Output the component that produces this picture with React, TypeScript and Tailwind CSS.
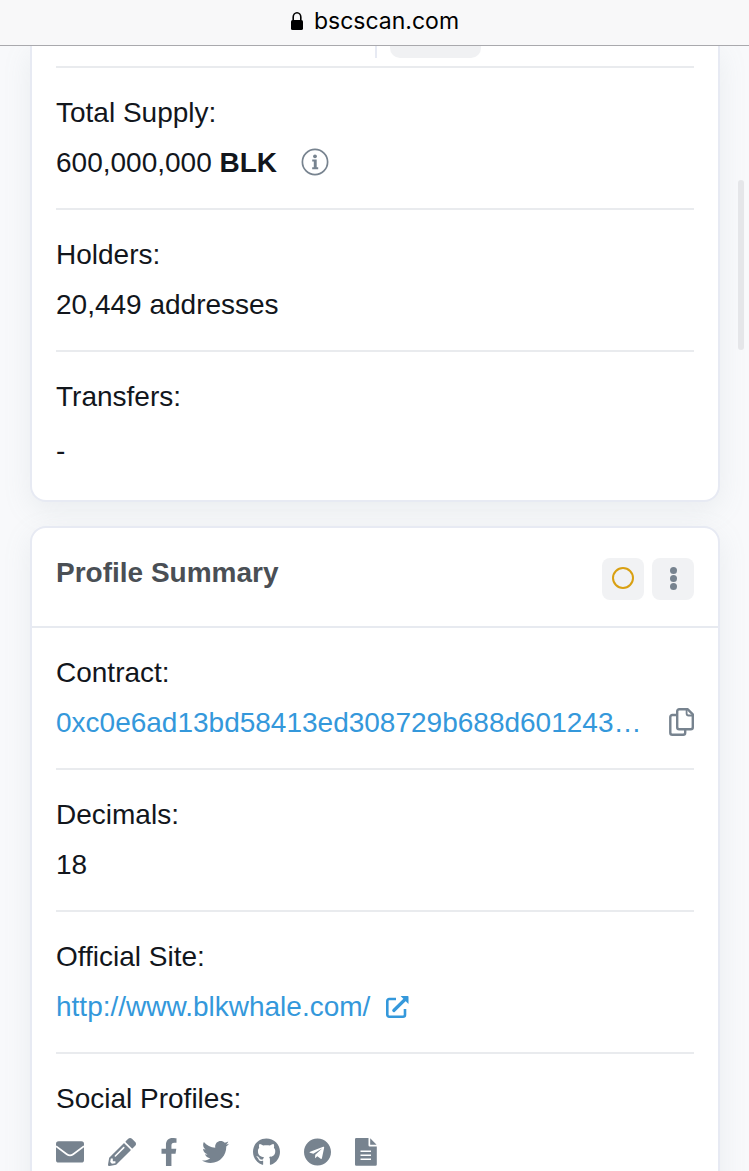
import type { ReactNode } from "react";
import {
  FaFacebookF,
  FaGithub,
  FaPencilAlt,
  FaTelegram,
  FaTwitter,
} from "react-icons/fa";

const LockIcon = () => (
  <svg viewBox="0 0 14 20" className="h-5 w-[14px]" aria-hidden="true">
    <rect x="1" y="9" width="12" height="10" rx="1.6" fill="#000" />
    <path
      d="M3.2 9.5V6a3.8 4.3 0 0 1 7.6 0v3.5"
      fill="none"
      stroke="#000"
      strokeWidth="1.6"
    />
  </svg>
);

const InfoIcon = () => (
  <svg viewBox="0 0 28 28" className="size-7" aria-hidden="true">
    <circle cx="14" cy="14" r="12.6" fill="none" stroke="#77838f" strokeWidth="1.7" />
    <circle cx="14" cy="8.3" r="1.9" fill="#77838f" />
    <path d="M11.2 11.4h4.5v7.8h1.5v2h-6v-2h1.6v-5.8h-1.6z" fill="#77838f" />
  </svg>
);

const CopyIcon = () => (
  <svg
    viewBox="0 0 25 28"
    className="h-7 w-[25px]"
    fill="none"
    stroke="currentColor"
    strokeWidth="2.4"
    strokeLinejoin="round"
    aria-hidden="true"
  >
    <path d="M10.2 1.3h8.6l5 5v12.9a2 2 0 0 1-2 2H10.2a2 2 0 0 1-2-2V3.3a2 2 0 0 1 2-2z" />
    <path d="M17.6 1.8v3.7a2 2 0 0 0 2 2h3.8" strokeWidth="1.8" />
    <path d="M8.2 7H3.3a2 2 0 0 0-2 2v15.700a2 2 0 0 0 2 2h10.900a2 2 0 0 0 2-2v-3.500" />
  </svg>
);

const ExternalIcon = () => (
  <svg viewBox="0 0 23 22" className="h-[22px] w-[23px]" fill="none" aria-hidden="true">
    <path
      d="M10 3H3.200A1.900 1.900 0 0 0 1.300 4.900v13.900a1.900 1.900 0 0 0 1.900 1.900h13.900a1.900 1.900 0 0 0 1.900-1.900V13"
      stroke="currentColor"
      strokeWidth="2.600"
    />
    <path d="M7.800 14.500 18.500 4" stroke="currentColor" strokeWidth="3.200" strokeLinecap="round" />
    <path d="M14.600 0h7.200a.7.7 0 0 1 .7.7v7.200z" fill="currentColor" />
  </svg>
);

const MailIcon = () => (
  <svg viewBox="0 0 28 28" className="size-7" aria-hidden="true">
    <rect y="3.300" width="28" height="21.300" rx="2.600" fill="currentColor" />
    <path
      d="M0 8.300l10.800 7.900q3.200 2.300 6.400 0L28 8.300"
      fill="none"
      stroke="#fff"
      strokeWidth="1.700"
    />
  </svg>
);

const DocIcon = () => (
  <svg viewBox="0 0 22 28" className="h-7 w-[22px]" aria-hidden="true">
    <path
      d="M1.300 0H13.500v7.200a1.300 1.300 0 0 0 1.300 1.300H21.800v18a1.300 1.300 0 0 1-1.300 1.300H1.300A1.300 1.300 0 0 1 0 26.500V1.300A1.300 1.300 0 0 1 1.300 0z"
      fill="currentColor"
    />
    <path d="M15.200 0.300l6.400 6.500h-6.400z" fill="currentColor" />
    <path d="M5.500 13.300h10.500M5.500 17.300h10.500M5.500 21.300h10.500" stroke="#fff" strokeWidth="1.600" />
  </svg>
);

const socials = [
  { label: "Email", icon: <MailIcon /> },
  { label: "Blog", icon: <FaPencilAlt className="h-7 w-7" /> },
  { label: "Facebook", icon: <FaFacebookF className="h-7 w-[18px]" /> },
  { label: "Twitter", icon: <FaTwitter className="h-7 w-[27px]" /> },
  { label: "GitHub", icon: <FaGithub className="h-7 w-[27px]" /> },
  { label: "Telegram", icon: <FaTelegram className="h-7 w-[27px]" /> },
  { label: "Whitepaper", icon: <DocIcon /> },
];

const Row = ({
  label,
  children,
  last = false,
}: {
  label: string;
  children: ReactNode;
  last?: boolean;
}) => (
  <div className={last ? "pt-6 pb-8" : "border-b-2 border-[#e9ebee] py-6"}>
    <dt>{label}</dt>
    <dd className="mt-2 flex h-[42px] items-center">{children}</dd>
  </div>
);

export default function App() {
  return (
    <div className="relative flex h-screen flex-col overflow-hidden bg-[#f8f9fb] font-['Liberation_Sans',Arial,sans-serif] text-[28px] leading-[42px] text-[#12161c]">
      <header className="z-10 flex h-[46px] shrink-0 items-center justify-center gap-[10px] border-b border-[#a9a9ad] bg-[#f8f8f9] pb-1 font-['Inter',sans-serif] text-[23px] text-black">
        <LockIcon />
        <span>bscscan.com</span>
      </header>

      <main className="flex min-h-0 flex-1 flex-col gap-6 pr-[29px] pl-[30px]">
        {/* Overview, scrolled part of the way up */}
        <section className="shrink-0 rounded-b-2xl border-2 border-t-0 border-[#e7eaf3] bg-white px-6 shadow-[0_8px_28px_rgba(140,152,164,0.13)]">
          <div className="flex h-[22px] items-start border-b-2 border-[#e9ebee]">
            <div className="box-content h-3 w-1/2 border-r-2 border-[#e7eaf3]" />
            <button
              type="button"
              aria-label="More"
              className="ml-[13px] h-3 w-[91px] rounded-b-[10px] bg-[#f0f1f3]"
            />
          </div>
          <dl>
            <Row label="Total Supply:">
              <span>
                600,000,000 <b>BLK</b>
              </span>
              <button type="button" aria-label="Supply info" className="ml-6 pb-[2px]">
                <InfoIcon />
              </button>
            </Row>
            <Row label="Holders:">20,449 addresses</Row>
            <Row label="Transfers:" last>
              <span className="pt-2">-</span>
            </Row>
          </dl>
        </section>

        <section className="shrink-0 rounded-2xl border-2 border-[#e7eaf3] bg-white shadow-[0_8px_28px_rgba(140,152,164,0.13)]">
          <div className="flex h-[100px] items-start justify-between border-b-2 border-[#e7eaf0] px-6 pt-6">
            <h2 className="font-bold text-[#4a4f55]">Profile Summary</h2>
            <div className="flex gap-2 pt-[6px]">
              <button
                type="button"
                aria-label="Token reputation"
                className="flex h-[42px] w-[42px] items-center justify-center rounded-lg bg-[#f1f2f4] pb-[2px]"
              >
                <span className="size-[22px] rounded-full border-2 border-[#d9a012]" />
              </button>
              <button
                type="button"
                aria-label="Menu"
                className="flex h-[42px] w-[42px] flex-col items-center justify-center gap-px rounded-lg bg-[#f1f2f4] pb-[2px]"
              >
                <span className="size-[7px] rounded-full bg-[#77838f]" />
                <span className="size-[7px] rounded-full bg-[#77838f]" />
                <span className="size-[7px] rounded-full bg-[#77838f]" />
              </button>
            </div>
          </div>

          <dl className="px-6">
            <Row label="Contract:">
              <a href="#contract" className="min-w-0 flex-1 truncate text-[#3498db]">
                0xc0e6ad13bd58413ed308729b688d601243…
              </a>
              <button
                type="button"
                aria-label="Copy address"
                className="ml-6 pb-[2px] text-[#77838f]"
              >
                <CopyIcon />
              </button>
            </Row>
            <Row label="Decimals:">18</Row>
            <Row label="Official Site:">
              <a href="#site" className="flex items-center gap-4 text-[#3498db]">
                http://www.blkwhale.com/
                <ExternalIcon />
              </a>
            </Row>
            <Row label="Social Profiles:" last>
              <ul className="flex gap-6 pt-[6px] text-[#77838f]">
                {socials.map((item) => (
                  <li key={item.label}>
                    <a href={`#${item.label.toLowerCase()}`} aria-label={item.label}>
                      {item.icon}
                    </a>
                  </li>
                ))}
              </ul>
            </Row>
          </dl>
        </section>
      </main>

      {/* Scroll thumb floats over the page */}
      <div className="absolute top-[180px] right-[5px] h-[170px] w-[6px] rounded-full bg-[#e5e6e9]" />
    </div>
  );
}
